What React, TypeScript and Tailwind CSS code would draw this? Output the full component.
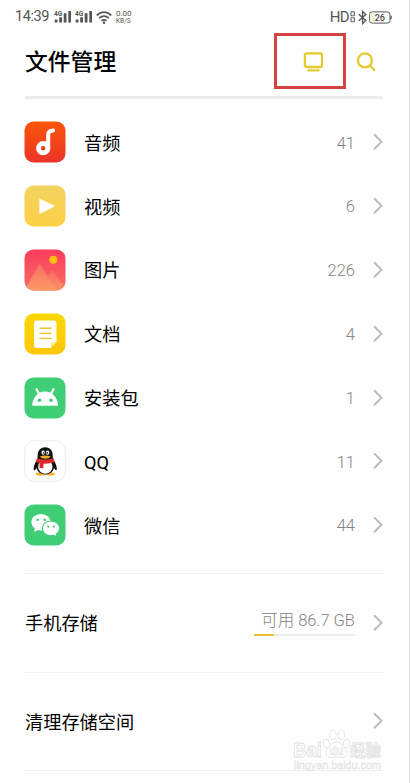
import type { ReactNode } from 'react';

interface Category {
  label: string;
  count: number;
  icon: ReactNode;
}

function AudioIcon() {
  return (
    <svg viewBox="0 0 42 42" className="size-[42px]">
      <defs>
        <linearGradient id="audio" x1="0" y1="0" x2="0" y2="1">
          <stop offset="0" stopColor="#fa5507" />
          <stop offset="1" stopColor="#ec342c" />
        </linearGradient>
      </defs>
      <rect x="0.5" y="0.5" width="41" height="41" rx="9" fill="url(#audio)" />
      <circle cx="19.2" cy="27.2" r="4.7" fill="none" stroke="#fff" strokeWidth="4.8" />
      <path d="M24.2 28V13.4Q24.2 9.6 29.2 9.4" fill="none" stroke="#fff" strokeWidth="4" strokeLinecap="round" />
    </svg>
  );
}

function VideoIcon() {
  return (
    <svg viewBox="0 0 42 42" className="size-[42px]">
      <defs>
        <linearGradient id="video" x1="0" y1="0" x2="0" y2="1">
          <stop offset="0" stopColor="#f3d361" />
          <stop offset="1" stopColor="#fbd044" />
        </linearGradient>
      </defs>
      <rect x="0.5" y="0.5" width="41" height="41" rx="9" fill="url(#video)" />
      <path d="M15.8 14v14.4L30.4 21.2z" fill="#fff" stroke="#fff" strokeWidth="0.8" strokeLinejoin="round" />
    </svg>
  );
}

function ImageIcon() {
  return (
    <svg viewBox="0 0 42 42" className="size-[42px]">
      <defs>
        <linearGradient id="image" x1="0" y1="0" x2="0" y2="1">
          <stop offset="0" stopColor="#fa3c5c" />
          <stop offset="1" stopColor="#fa6f62" />
        </linearGradient>
        <linearGradient id="peak" x1="0" y1="0" x2="0" y2="1">
          <stop offset="0" stopColor="#f76f68" />
          <stop offset="1" stopColor="#fd9a67" />
        </linearGradient>
        <clipPath id="tile">
          <rect x="0.5" y="0.5" width="41" height="41" rx="9" />
        </clipPath>
      </defs>
      <g clipPath="url(#tile)">
        <rect width="42" height="42" fill="url(#image)" />
        <path d="M15 42 27.2 22.3q1-1.5 2 0L42 40v2z" fill="url(#peak)" opacity="0.8" />
        <path d="M2 39 14.4 16.6q1.2-1.8 2.4 0L33 42H2z" fill="url(#peak)" />
      </g>
      <circle cx="29.3" cy="10.8" r="4" fill="#fdbf0f" />
    </svg>
  );
}

function DocIcon() {
  return (
    <svg viewBox="0 0 42 42" className="size-[42px]">
      <defs>
        <linearGradient id="doc" x1="0" y1="0" x2="0" y2="1">
          <stop offset="0" stopColor="#f7d703" />
          <stop offset="1" stopColor="#fdc70c" />
        </linearGradient>
      </defs>
      <rect x="0.5" y="0.5" width="41" height="41" rx="9" fill="url(#doc)" />
      <path d="M12.5 7.5h17.3q2.7 0 2.7 2.7v19.1l-5.8 5.6H12.5q-2.5 0-2.5-2.6V10.2q0-2.7 2.5-2.7z" fill="#fffdf4" />
      <path d="M27 34.8v-3.5q0-2 2-2h3.4z" fill="#fbe88c" />
      <path d="M16 15.2h11M16 20.4h11M16 25.4h11" stroke="#efc42c" strokeWidth="1.4" strokeLinecap="round" />
    </svg>
  );
}

function ApkIcon() {
  return (
    <svg viewBox="0 0 42 42" className="size-[42px]">
      <rect x="0.5" y="0.5" width="41" height="41" rx="9" fill="#3fcd76" />
      <path d="M8.2 28.8a12.9 14.2 0 0 1 25.8 0z" fill="#fff" />
      <path d="m12.5 12.2 3 5.5M29.5 12.2l-3 5.5" stroke="#fff" strokeWidth="2.2" strokeLinecap="round" />
      <circle cx="15.5" cy="23.3" r="1.8" fill="#3fcd76" />
      <circle cx="27" cy="23.3" r="1.8" fill="#3fcd76" />
    </svg>
  );
}

function QQIcon() {
  return (
    <svg viewBox="0 0 42 42" className="size-[42px]">
      <rect x="0.8" y="0.8" width="40.4" height="40.4" rx="9" fill="#fff" stroke="#e8e8e8" strokeWidth="0.9" />
      <ellipse cx="16.3" cy="34" rx="4.4" ry="1.7" fill="#f6b034" />
      <ellipse cx="26.5" cy="34" rx="4.4" ry="1.7" fill="#f6b034" />
      <path
        d="M21.2 7.2c-5 0-7.7 3.7-7.5 8.4l-.2 3.3c-2 2.8-4.4 7.6-3.6 11 .8.9 2-.6 2.8-1.8.8 4 4.2 6.3 8.6 6.3s7.8-2.3 8.6-6.3c.8 1.2 2 2.7 2.8 1.8.7-3.4-1.7-8.2-3.8-11l-.2-3.3c.2-4.7-2.5-8.4-7.5-8.4z"
        fill="#101010"
      />
      <ellipse cx="21.3" cy="26.8" rx="7.2" ry="7" fill="#fff" />
      <ellipse cx="19.2" cy="12.7" rx="1.7" ry="2.1" fill="#fff" />
      <ellipse cx="23.6" cy="12.7" rx="1.7" ry="2.1" fill="#fff" />
      <circle cx="19.6" cy="12.9" r="0.8" fill="#111" />
      <circle cx="23.2" cy="12.9" r="0.8" fill="#111" />
      <path d="M15.8 16.4q5.5-2 11 0-1.5 2.4-5.5 2.4t-5.5-2.4z" fill="#f8ad25" />
      <path d="M12.8 18.3q8.5 2.8 17 0l.5 4q-5 1.6-10.7 1.4l-.3 4.6-3.9-.3.2-4.8-3.6-1.3z" fill="#dd2b2e" />
    </svg>
  );
}

function WeChatIcon() {
  return (
    <svg viewBox="0 0 42 42" className="size-[42px]">
      <rect x="0.5" y="0.5" width="41" height="41" rx="9" fill="#3fcd76" />
      <path
        d="M17 10c-5.5 0-9.6 3.6-9.6 8.2 0 2.6 1.3 4.8 3.5 6.3l-.7 3.4 3.7-2c1 .3 2 .5 3.1.5 5.5 0 9.6-3.7 9.6-8.2S22.5 10 17 10z"
        fill="#fff"
      />
      <path
        d="M27 17c-4.9 0-8.6 3.2-8.6 7.4s3.7 7.3 8.6 7.3c1 0 2-.1 2.9-.4l3.2 1.7-.7-2.9c1.9-1.4 3.2-3.4 3.2-5.7 0-4.2-3.7-7.4-8.6-7.4z"
        fill="#fff"
        stroke="#3fcd76"
        strokeWidth="1.1"
      />
      <circle cx="13.7" cy="15.8" r="1.3" fill="#3fcd76" />
      <circle cx="20.7" cy="15.8" r="1.3" fill="#3fcd76" />
      <circle cx="24.3" cy="22.6" r="1.1" fill="#3fcd76" />
      <circle cx="29.9" cy="22.6" r="1.1" fill="#3fcd76" />
    </svg>
  );
}

function Chevron() {
  return (
    <svg viewBox="0 0 10 18" className="h-[18px] w-[10px] shrink-0">
      <path d="m1 1.2 7.5 7.5L1 16.2" fill="none" stroke="#bdbdbd" strokeWidth="2" />
    </svg>
  );
}

function SignalIcon() {
  return (
    <svg viewBox="0 0 18 14" className="h-[14px] w-[18px]">
      <text x="0" y="5.6" fontSize="6.5" fontWeight="700" fontFamily="Roboto, sans-serif" fill="#555">
        4G
      </text>
      <path d="M.7 9.5h2.8v3H.7zM5.2 7.2H8v5.3H5.2zM9.7 3.3h2.8v9.2H9.7zM14.3 1H17v11.5h-2.7z" fill="#555" />
    </svg>
  );
}

function WifiIcon() {
  return (
    <svg viewBox="0 0 16 13" className="h-[13px] w-4">
      <g fill="none" stroke="#555" strokeWidth="1.7">
        <path d="M.6 4.4q7.4-6.4 14.8 0" />
        <path d="M3.1 7.2q4.9-4 9.8 0" />
        <path d="M5.5 9.8q2.5-1.9 5 0" />
      </g>
      <circle cx="8" cy="11.8" r="1.2" fill="#555" />
    </svg>
  );
}

function StatusBar() {
  return (
    <div className="flex h-[34px] items-center pr-[17px] pl-[15px] text-[#555]">
      <span className="w-[39px] pt-px text-[14.5px] leading-none tracking-[-0.4px]">14:39</span>
      <div className="flex items-center gap-[3px]">
        <SignalIcon />
        <SignalIcon />
      </div>
      <div className="ml-[3px]">
        <WifiIcon />
      </div>
      <div className="mt-[-1px] ml-[4px] flex flex-col gap-px">
        <span className="h-[7px] text-[8px] leading-[7px]">0.00</span>
        <span className="h-[6px] text-[6.5px] leading-[6px]">KB/S</span>
      </div>
      <div className="ml-auto flex items-center">
        <span className="text-[15px] leading-none tracking-[-0.6px]">HD</span>
        <svg viewBox="0 0 6 12" className="mr-[2px] ml-px h-3 w-[6px]" fill="none" stroke="#666" strokeWidth="1.1">
          <rect x="1" y="0.8" width="3.4" height="4" rx="0.5" />
          <rect x="1" y="6.8" width="3.4" height="4" rx="0.5" />
        </svg>
        <svg viewBox="0 0 9 15" className="h-[15px] w-[9px]" fill="none" stroke="#555" strokeWidth="1.3">
          <path d="M.8 4.2 7.8 10.5 4.6 13.6V1.4L7.8 4.5.8 10.8" />
        </svg>
        <svg viewBox="0 0 23 13" className="ml-[2px] h-[13px] w-[23px]">
          <rect x="0.6" y="0.9" width="20.4" height="11.2" rx="2.6" fill="#fff" stroke="#555" />
          <rect x="1.4" y="1.7" width="4.6" height="9.6" rx="1.8" fill="#eef3cd" />
          <path d="M22 4.7v3.6" stroke="#555" strokeWidth="1.4" />
          <text x="10.8" y="9.7" textAnchor="middle" fontSize="9" fontWeight="500" fontFamily="Roboto, sans-serif" fill="#444">
            26
          </text>
        </svg>
      </div>
    </div>
  );
}

function Header() {
  return (
    <header className="mr-[27px] ml-[25px] flex h-[65px] items-start border-b-[3px] border-[#ececec]">
      <h1 className="mt-[15px] text-[22.8px] leading-[28px] font-medium">文件管理</h1>
      <div className="mt-[-1px] ml-auto flex h-[56px] w-[72px] items-center border-[3px] border-[#d44242] pl-[26px]">
        <svg viewBox="0 0 20 20" className="mt-px size-5" fill="none" stroke="#e5ca2c" strokeWidth="2.3">
          <rect x="1.9" y="1.4" width="17.2" height="13.6" rx="1.8" />
          <path d="M5.3 18.3h10.4" strokeLinecap="round" />
        </svg>
      </div>
      <svg viewBox="0 0 20 20" className="mt-[18px] mr-[6px] ml-[10px] size-5" fill="none" stroke="#e5ca2c" strokeWidth="2.3">
        <circle cx="8.9" cy="8.4" r="7" />
        <path d="m14 13.5 5 5.2" />
      </svg>
    </header>
  );
}

const categories: Category[] = [
  { label: '音频', count: 41, icon: <AudioIcon /> },
  { label: '视频', count: 6, icon: <VideoIcon /> },
  { label: '图片', count: 226, icon: <ImageIcon /> },
  { label: '文档', count: 4, icon: <DocIcon /> },
  { label: '安装包', count: 1, icon: <ApkIcon /> },
  { label: 'QQ', count: 11, icon: <QQIcon /> },
  { label: '微信', count: 44, icon: <WeChatIcon /> },
];

function CategoryRow({ label, count, icon }: Category) {
  return (
    <li className="flex h-[63.8px] items-center">
      {icon}
      <span className="ml-[18px] pt-[2px] text-[18.2px]">{label}</span>
      <span className="mr-[18px] ml-auto pt-[3px] text-[16.5px] font-light text-[#858585]">{count}</span>
      <Chevron />
    </li>
  );
}

function Watermark() {
  return (
    <div className="absolute top-[728px] left-[293px] w-[92px]">
      <svg viewBox="0 0 92 44" className="h-11 w-[92px]" fontFamily="'Liberation Sans', 'Noto Sans CJK SC', sans-serif">
        <g fill="#fff" stroke="#dedede" strokeWidth="0.8">
          <ellipse cx="33.5" cy="15.5" rx="3.2" ry="4.3" transform="rotate(-15 33.5 15.5)" />
          <ellipse cx="40" cy="6.8" rx="3.2" ry="4.6" />
          <ellipse cx="48.5" cy="6.8" rx="3.2" ry="4.6" />
          <ellipse cx="53.5" cy="15.5" rx="3.2" ry="4.3" transform="rotate(15 53.5 15.5)" />
          <path d="M43.5 14c-4 0-5.4 3.5-8.1 5.7-3.4 3-3 9.2 2 9.700 2.400.2 4-.6 6.200-.6s3.800.8 6.200.6c5-.5 5.600-6.400 2.200-9.700-2.600-2.300-4.400-5.700-8.500-5.700z" />
          <text x="0" y="29" fontSize="20" textLength="29" lengthAdjust="spacingAndGlyphs" fontWeight="700">
            Bai
          </text>
          <text x="36.5" y="26.5" fontSize="12" fontWeight="700" strokeWidth="0.6" textLength="14">
            du
          </text>
          <text x="57" y="28" fontSize="15.5" fontWeight="700" textLength="31">
            经验
          </text>
          <text x="1" y="41" fontSize="10.5" strokeWidth="0.5" textLength="87" lengthAdjust="spacingAndGlyphs">
            jingyan.baidu.com
          </text>
        </g>
      </svg>
    </div>
  );
}

export default function App() {
  return (
    <div className="relative h-[783px] w-[410px] overflow-hidden border-r border-[#dcdcdc] bg-[#fefefe] font-[Roboto,'Noto_Sans_CJK_SC',sans-serif] text-black">
      <StatusBar />
      <Header />

      <ul className="mt-[11.5px] mr-[26px] ml-6">{categories.map((c) => <CategoryRow key={c.label} {...c} />)}</ul>

      <div className="mt-[15.9px] mr-[26px] ml-[25px]">
        <div className="flex h-[99px] items-center border-t border-[#efefef]">
          <span className="pt-[2px] text-[18.2px]">手机存储</span>
          <div className="mr-[18px] ml-auto flex flex-col items-end">
            <span className="pt-px text-[16.5px] leading-[22px] font-light text-[#858585]">可用 86.7 GB</span>
            <div className="mt-[2px] h-[2px] w-[101px] bg-[#ededed]">
              <div className="h-full w-5 bg-[#e5bd34]" />
            </div>
          </div>
          <Chevron />
        </div>
        <div className="flex h-[98px] items-center border-t border-[#f2f2f2]">
          <span className="pt-[2px] text-[18.2px]">清理存储空间</span>
          <div className="ml-auto">
            <Chevron />
          </div>
        </div>
        <div className="border-t border-[#efefef]" />
      </div>

      <Watermark />
    </div>
  );
}
